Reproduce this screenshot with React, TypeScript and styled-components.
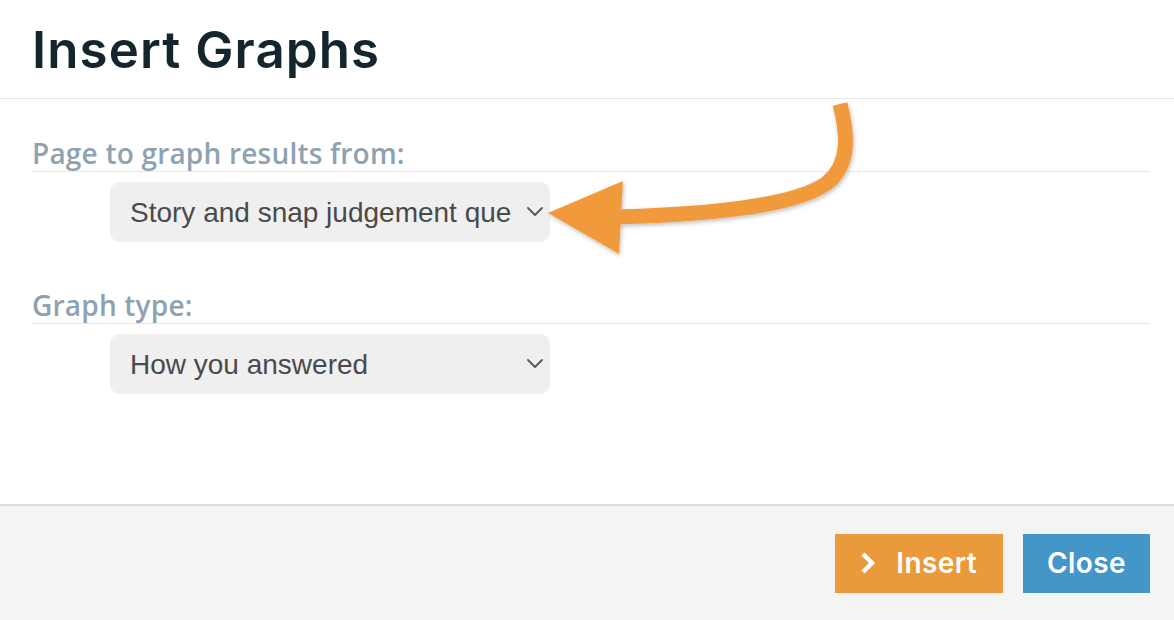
import React from 'react';
import styled, { createGlobalStyle } from 'styled-components';

const GlobalStyle = createGlobalStyle`
  html, body {
    margin: 0;
    padding: 0;
    background: #ffffff;
  }
  * {
    box-sizing: border-box;
  }
`;

const Modal = styled.div`
  position: relative;
  width: 1174px;
  height: 620px;
  display: flex;
  flex-direction: column;
  background: #ffffff;
  overflow: hidden;
`;

const Header = styled.header`
  height: 99px;
  display: flex;
  align-items: center;
  padding-left: 32px;
  border-bottom: 1px solid #e6e6e6;
`;

const Title = styled.h1`
  margin: 0;
  font-family: Inter, 'Open Sans', sans-serif;
  font-weight: 600;
  font-size: 51px;
  letter-spacing: 1.1px;
  color: #15252d;
`;

const Body = styled.div`
  flex: 1;
  padding: 38px 24px 0 32px;
  display: flex;
  flex-direction: column;
`;

const Field = styled.div<{ $gap?: number }>`
  display: flex;
  flex-direction: column;
  margin-top: ${({ $gap }) => $gap ?? 0}px;
`;

const Label = styled.label`
  font-family: 'Open Sans', sans-serif;
  font-weight: 600;
  font-size: 28px;
  line-height: 32px;
  letter-spacing: 0.2px;
  color: #8ea2b0;
  padding-bottom: 2px;
  border-bottom: 1px solid #e8e8e8;
`;

const SelectWrap = styled.div`
  position: relative;
  margin: 10px 0 0 78px;
  width: 440px;
  height: 60px;
`;

const Select = styled.select`
  appearance: none;
  -webkit-appearance: none;
  width: 100%;
  height: 100%;
  border: none;
  outline: none;
  border-radius: 10px;
  background: #efefef;
  padding: 0 38px 0 20px;
  font-family: 'Liberation Sans', Arial, sans-serif;
  font-size: 28px;
  color: #4a4a4a;
  white-space: nowrap;
  overflow: hidden;
  cursor: pointer;
`;

const Chevron = styled.svg`
  position: absolute;
  right: 6px;
  top: 24px;
  pointer-events: none;
`;

const Footer = styled.footer`
  height: 116px;
  background: #f4f4f4;
  border-top: 2px solid #dcdcdc;
  display: flex;
  align-items: center;
  justify-content: flex-end;
  gap: 20px;
  padding-right: 24px;
`;

const Button = styled.button<{ $tone: 'orange' | 'blue' }>`
  height: 59px;
  border: none;
  border-radius: 0;
  display: flex;
  align-items: center;
  gap: 20px;
  padding: ${({ $tone }) => ($tone === 'orange' ? '0 26px 0 25px' : '0 24px')};
  background: ${({ $tone }) => ($tone === 'orange' ? '#ea9a3a' : '#4596c8')};
  color: #ffffff;
  font-family: Inter, 'Open Sans', sans-serif;
  font-weight: 600;
  font-size: 28px;
  letter-spacing: 0.4px;
  cursor: pointer;
`;

const Annotation = styled.svg`
  position: absolute;
  left: 0;
  top: 0;
  pointer-events: none;
`;

const SelectChevron = () => (
  <Chevron width="18" height="12" viewBox="0 0 18 12">
    <path d="M2 2 L9 9 L16 2" fill="none" stroke="#555" strokeWidth="1.8" strokeLinecap="round" strokeLinejoin="round" />
  </Chevron>
);

const InsertIcon = () => (
  <svg width="16" height="24" viewBox="0 0 16 24">
    <polyline points="3,3 12,12 3,21" fill="none" stroke="#fff" strokeWidth="4.5" strokeLinejoin="miter" />
  </svg>
);

export default function App() {
  return (
    <>
      <GlobalStyle />
      <Modal>
        <Header>
          <Title>Insert Graphs</Title>
        </Header>
        <Body>
          <Field>
            <Label>Page to graph results from:</Label>
            <SelectWrap>
              <Select defaultValue="story">
                <option value="story">Story and snap judgement questions</option>
              </Select>
              <SelectChevron />
            </SelectWrap>
          </Field>
          <Field $gap={47}>
            <Label>Graph type:</Label>
            <SelectWrap>
              <Select defaultValue="how">
                <option value="how">How you answered</option>
              </Select>
              <SelectChevron />
            </SelectWrap>
          </Field>
        </Body>
        <Footer>
          <Button $tone="orange">
            <InsertIcon />
            Insert
          </Button>
          <Button $tone="blue">Close</Button>
        </Footer>
        <Annotation width="1174" height="620" viewBox="0 0 1174 620">
          <defs>
            <filter id="shadow" x="-10%" y="-10%" width="120%" height="130%">
              <feDropShadow dx="1" dy="2" stdDeviation="2" floodColor="#000" floodOpacity="0.25" />
            </filter>
          </defs>
          <g filter="url(#shadow)" fill="#f09a3a">
            <path
              d="M840 104 C 848 135, 850 165, 827 183 C 797 205, 720 214, 616 217"
              fill="none"
              stroke="#f09a3a"
              strokeWidth="15"
            />
            <polygon points="548,213 623,181 619,254" />
          </g>
        </Annotation>
      </Modal>
    </>
  );
}
